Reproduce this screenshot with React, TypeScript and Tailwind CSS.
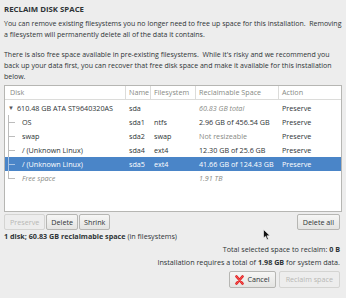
import React from 'react';

const rows = [
  { disk: '610.48 GB ATA ST9640320AS', name: 'sda', fs: '', space: '60.83 GB total', action: 'Preserve', kind: 'root' },
  { disk: 'OS', name: 'sda1', fs: 'ntfs', space: '2.96 GB of 456.54 GB', action: 'Preserve', kind: 'part' },
  { disk: 'swap', name: 'sda2', fs: 'swap', space: 'Not resizeable', action: 'Preserve', kind: 'dim' },
  { disk: '/ (Unknown Linux)', name: 'sda4', fs: 'ext4', space: '12.30 GB of 25.6 GB', action: 'Preserve', kind: 'part' },
  { disk: '/ (Unknown Linux)', name: 'sda5', fs: 'ext4', space: '41.66 GB of 124.43 GB', action: 'Preserve', kind: 'selected' },
  { disk: 'Free space', name: '', fs: '', space: '1.91 TB', action: '', kind: 'free' },
];

const cols = 'grid grid-cols-[121px_25px_45px_83px_1fr]';

const App = () => {
  return (
    <div
      className="w-[346px] h-[298px] bg-[#ededed] text-[#2e3436] text-[7.2px] leading-[11px] overflow-hidden relative"
      style={{ fontFamily: '"Open Sans", "Liberation Sans", sans-serif' }}
    >
      <div className="px-[4px] pt-[4px]">
        <div className="font-bold text-[7.8px] h-[12px]">RECLAIM DISK SPACE</div>
        <div className="mt-[2px] text-[7px]">
          <p>You can remove existing filesystems you no longer need to free up space for this installation.&nbsp; Removing a filesystem will permanently delete all of the data it contains.</p>
          <p className="mt-[9px]">There is also free space available in pre-existing filesystems.&nbsp; While it's risky and we recommend you back up your data first, you can recover that free disk space and make it available for this installation below.</p>
        </div>

        {/* disk table */}
        <div className="mt-[3px] h-[127px] border border-[#b6b6b3] bg-white">
          <div className={`${cols} h-[14px] items-center text-[#888a85] border-b border-[#dcdcda]`}>
            <div className="pl-[5px] border-r border-[#dcdcda] h-full flex items-center">Disk</div>
            <div className="pl-[3px] border-r border-[#dcdcda] h-full flex items-center">Name</div>
            <div className="pl-[3px] border-r border-[#dcdcda] h-full flex items-center">Filesystem</div>
            <div className="pl-[3px] border-r border-[#dcdcda] h-full flex items-center">Reclaimable Space</div>
            <div className="pl-[3px] h-full flex items-center">Action</div>
          </div>
          <div className="pt-[1px]">
            {rows.map((r, i) => {
              const sel = r.kind === 'selected';
              return (
                <div
                  key={i}
                  className={`${cols} h-[14px] items-center ${sel ? 'bg-[#4a85c8] text-white' : ''}`}
                >
                  <div className="flex items-center h-full relative">
                    {r.kind === 'root' ? (
                      <span className="pl-[3px] pr-[3px] text-[6px] text-[#555]">▼</span>
                    ) : (
                      <span className="relative w-[17px] h-full shrink-0">
                        <span className={`absolute left-[3px] top-0 w-[1px] ${r.kind === 'free' ? 'h-[7px]' : 'h-full'} ${sel ? 'bg-[#a9c4e4]' : 'bg-[#bcbcbc]'}`} />
                        <span className={`absolute left-[3px] top-[7px] w-[7px] h-[1px] ${sel ? 'bg-[#a9c4e4]' : 'bg-[#bcbcbc]'}`} />
                      </span>
                    )}
                    <span className={r.kind === 'free' ? 'italic text-[#888a85]' : ''}>{r.disk}</span>
                  </div>
                  <div className="pl-[3px]">{r.name}</div>
                  <div className="pl-[3px]">{r.fs}</div>
                  <div
                    className={`pl-[3px] ${
                      r.kind === 'root' || r.kind === 'free' ? 'italic text-[#888a85]' : r.kind === 'dim' ? 'text-[#888a85]' : ''
                    }`}
                  >
                    {r.space}
                  </div>
                  <div className="pl-[3px]">{r.action}</div>
                </div>
              );
            })}
          </div>
        </div>

        {/* buttons */}
        <div className="mt-[2px] flex items-center justify-between">
          <div className="flex gap-[1px]">
            <button className="h-[16px] px-[5px] border border-[#d4d4d2] bg-[#ededed] rounded-[2px] text-[#b8b8b5]">Preserve</button>
            <button className="h-[16px] px-[4px] border border-[#b6b6b3] bg-gradient-to-b from-[#f6f6f5] to-[#e4e4e2] rounded-[2px]">Delete</button>
            <button className="h-[16px] px-[4px] border border-[#b6b6b3] bg-gradient-to-b from-[#f6f6f5] to-[#e4e4e2] rounded-[2px]">Shrink</button>
          </div>
          <button className="h-[16px] px-[5px] mr-[2px] border border-[#b6b6b3] bg-gradient-to-b from-[#f6f6f5] to-[#e4e4e2] rounded-[2px]">Delete all</button>
        </div>

        <div className="mt-[1px]">
          <span className="font-bold">1 disk; 60.83 GB reclaimable space</span> (in filesystems)
        </div>

        <div className="mt-[2px] pr-[2px] text-right">
          <div>
            Total selected space to reclaim: <span className="font-bold">0 B</span>
          </div>
          <div className="mt-[2px]">
            Installation requires a total of <span className="font-bold">1.98 GB</span> for system data.
          </div>
        </div>

        <div className="mt-[3px] pr-[2px] flex justify-end gap-[3px]">
          <button className="h-[17px] px-[5px] flex items-center gap-[3px] border border-[#b6b6b3] bg-gradient-to-b from-[#f6f6f5] to-[#e4e4e2] rounded-[2px]">
            <svg width="9" height="10" viewBox="0 0 9 10">
              <path d="M1.5 1.5 L7.5 8.5 M7.5 1.5 L1.5 8.5" stroke="#d22" strokeWidth="2.6" strokeLinecap="round" />
              <path d="M1.5 1.5 L7.5 8.5 M7.5 1.5 L1.5 8.5" stroke="#f55" strokeWidth="1" strokeLinecap="round" />
            </svg>
            Cancel
          </button>
          <button className="h-[17px] px-[6px] border border-[#d4d4d2] bg-[#ededed] rounded-[2px] text-[#b8b8b5]">Reclaim space</button>
        </div>
      </div>

      {/* mouse pointer */}
      <svg className="absolute left-[263px] top-[229px]" width="8" height="12" viewBox="0 0 8 12">
        <path d="M0.5 0.5 L0.5 9 L2.6 7.2 L4 10.8 L5.4 10.2 L4 6.8 L7 6.8 Z" fill="#111" stroke="#fff" strokeWidth="0.6" />
      </svg>
    </div>
  );
};

export default App;
